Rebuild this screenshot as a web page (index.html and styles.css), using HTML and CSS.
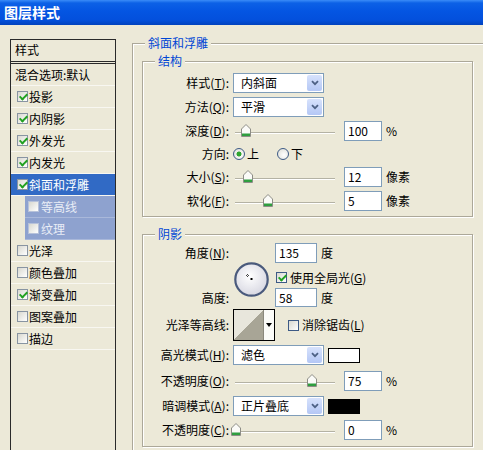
FILE: index.html
```html
<!DOCTYPE html>
<html lang="zh-CN">
<head>
    <meta charset="UTF-8">
    <title>图层样式</title>
    <link rel="stylesheet" href="styles.css">
</head>
<body>
    <div class="titlebar">图层样式</div>
    <div class="dialog">
        <div class="style_list">
            <div class="list_head">样式</div>
            <div class="list_row plain">混合选项:默认</div>
            <div class="list_row"><span class="check on"></span>投影</div>
            <div class="list_row"><span class="check on"></span>内阴影</div>
            <div class="list_row"><span class="check on"></span>外发光</div>
            <div class="list_row"><span class="check on"></span>内发光</div>
            <div class="list_row selected"><span class="check on"></span>斜面和浮雕</div>
            <div class="list_row sub"><span class="check"></span>等高线</div>
            <div class="list_row sub"><span class="check"></span>纹理</div>
            <div class="list_row"><span class="check"></span>光泽</div>
            <div class="list_row"><span class="check"></span>颜色叠加</div>
            <div class="list_row"><span class="check on"></span>渐变叠加</div>
            <div class="list_row"><span class="check"></span>图案叠加</div>
            <div class="list_row"><span class="check"></span>描边</div>
        </div>

        <fieldset class="group outer">
            <legend>斜面和浮雕</legend>

            <fieldset class="group structure">
                <legend>结构</legend>
                <div class="row">
                    <span class="label">样式(<u>T</u>):</span>
                    <div class="select"><span>内斜面</span><i class="arrow"><svg width="8" height="6" viewBox="0 0 8 6"><path d="M1 1.2 L4 4.2 L7 1.2" fill="none" stroke="#4d6185" stroke-width="1.8"/></svg></i></div>
                </div>
                <div class="row">
                    <span class="label">方法(<u>Q</u>):</span>
                    <div class="select"><span>平滑</span><i class="arrow"><svg width="8" height="6" viewBox="0 0 8 6"><path d="M1 1.2 L4 4.2 L7 1.2" fill="none" stroke="#4d6185" stroke-width="1.8"/></svg></i></div>
                </div>
                <div class="row">
                    <span class="label">深度(<u>D</u>):</span>
                    <div class="slider"><div class="track"></div><svg class="thumb" style="left:8px" width="10" height="13" viewBox="0 0 10 13"><path d="M0.5 5 L5 0.5 L9.5 5 V12.5 H0.5 Z" fill="#fbfbf8" stroke="#8d8d86"/><rect x="1" y="9.5" width="8" height="2.5" fill="#2f9e3f"/></svg></div>
                    <div class="field">100</div><span class="unit">%</span>
                </div>
                <div class="row short">
                    <span class="label">方向:</span>
                    <span class="radio on"></span><span class="radio_text">上</span>
                    <span class="radio"></span><span class="radio_text">下</span>
                </div>
                <div class="row">
                    <span class="label">大小(<u>S</u>):</span>
                    <div class="slider"><div class="track"></div><svg class="thumb" style="left:10px" width="10" height="13" viewBox="0 0 10 13"><path d="M0.5 5 L5 0.5 L9.5 5 V12.5 H0.5 Z" fill="#fbfbf8" stroke="#8d8d86"/><rect x="1" y="9.5" width="8" height="2.5" fill="#2f9e3f"/></svg></div>
                    <div class="field">12</div><span class="unit">像素</span>
                </div>
                <div class="row">
                    <span class="label">软化(<u>F</u>):</span>
                    <div class="slider"><div class="track"></div><svg class="thumb" style="left:30px" width="10" height="13" viewBox="0 0 10 13"><path d="M0.5 5 L5 0.5 L9.5 5 V12.5 H0.5 Z" fill="#fbfbf8" stroke="#8d8d86"/><rect x="1" y="9.5" width="8" height="2.5" fill="#2f9e3f"/></svg></div>
                    <div class="field">5</div><span class="unit">像素</span>
                </div>
            </fieldset>

            <fieldset class="group shadow">
                <legend>阴影</legend>
                <div class="angle_block">
                    <span class="label angle_label">角度(<u>N</u>):</span>
                    <div class="dial">
                        <svg width="35" height="35" viewBox="0 0 35 35">
                            <defs>
                                <radialGradient id="dialfill" cx="45%" cy="40%" r="60%">
                                    <stop offset="0" stop-color="#ffffff"/>
                                    <stop offset="1" stop-color="#d8d8e2"/>
                                </radialGradient>
                            </defs>
                            <circle cx="17.5" cy="17.5" r="16.2" fill="url(#dialfill)" stroke="#4a5a7c" stroke-width="2.2"/>
                            <rect x="13" y="12" width="1" height="1" fill="#444"/>
                            <rect x="12" y="13" width="1" height="1" fill="#444"/>
                            <rect x="14" y="13" width="1" height="1" fill="#444"/>
                            <rect x="13" y="14" width="1" height="1" fill="#444"/>
                            <rect x="16.5" y="16" width="2" height="2" fill="#000"/>
                        </svg>
                    </div>
                    <div class="angle_value"><div class="field wide">135</div><span class="unit">度</span></div>
                    <div class="angle_global"><span class="check on dark"></span><span>使用全局光(<u>G</u>)</span></div>
                    <span class="label height_label">高度:</span>
                    <div class="height_value"><div class="field wide">58</div><span class="unit">度</span></div>
                </div>

                <div class="row contour_row">
                    <span class="label">光泽等高线:</span>
                    <div class="contour"><div class="contour_preview"></div><div class="contour_drop"><i class="tri"></i></div></div>
                    <span class="check dark"></span><span>消除锯齿(<u>L</u>)</span>
                </div>
                <div class="row mode_row">
                    <span class="label">高光模式(<u>H</u>):</span>
                    <div class="select"><span>滤色</span><i class="arrow"><svg width="8" height="6" viewBox="0 0 8 6"><path d="M1 1.2 L4 4.2 L7 1.2" fill="none" stroke="#4d6185" stroke-width="1.8"/></svg></i></div>
                    <span class="swatch"></span>
                </div>
                <div class="row opacity_row">
                    <span class="label">不透明度(<u>O</u>):</span>
                    <div class="slider"><div class="track"></div><svg class="thumb" style="left:74px" width="10" height="13" viewBox="0 0 10 13"><path d="M0.5 5 L5 0.5 L9.5 5 V12.5 H0.5 Z" fill="#fbfbf8" stroke="#8d8d86"/><rect x="1" y="9.5" width="8" height="2.5" fill="#2f9e3f"/></svg></div>
                    <div class="field">75</div><span class="unit">%</span>
                </div>
                <div class="row shadow_mode_row">
                    <span class="label">暗调模式(<u>A</u>):</span>
                    <div class="select"><span>正片叠底</span><i class="arrow"><svg width="8" height="6" viewBox="0 0 8 6"><path d="M1 1.2 L4 4.2 L7 1.2" fill="none" stroke="#4d6185" stroke-width="1.8"/></svg></i></div>
                    <span class="swatch black"></span>
                </div>
                <div class="row opacity_row last">
                    <span class="label">不透明度(<u>C</u>):</span>
                    <div class="slider"><div class="track"></div><svg class="thumb" style="left:-2px" width="10" height="13" viewBox="0 0 10 13"><path d="M0.5 5 L5 0.5 L9.5 5 V12.5 H0.5 Z" fill="#fbfbf8" stroke="#8d8d86"/><rect x="1" y="9.5" width="8" height="2.5" fill="#2f9e3f"/></svg></div>
                    <div class="field">0</div><span class="unit">%</span>
                </div>
            </fieldset>
        </fieldset>
    </div>
</body>
</html>
```

FILE: styles.css
```css
* {
    margin: 0;
    padding: 0;
    box-sizing: border-box;
}
html, body {
    height: 450px;
    overflow: hidden;
}
body {
    background-color: #ece9d8;
    font-family: "Noto Sans CJK SC", "Noto Sans", sans-serif;
    font-size: 12px;
    line-height: 16px;
    color: #000;
}
u {
    text-decoration: underline;
    text-underline-offset: 1px;
}
.titlebar {
    height: 25px;
    padding-left: 4px;
    line-height: 24px;
    color: #fff;
    font-size: 14px;
    font-weight: bold;
    background: linear-gradient(to bottom, #3a8cf8 0, #0c61e6 12%, #0455e2 45%, #0350dc 80%, #0142bd 100%);
}
.dialog {
    display: flex;
    align-items: flex-start;
}

/* left list - runs off the bottom of the window */
.style_list {
    flex: none;
    width: 106px;
    height: 411px;
    margin: 14px 0 0 10px;
    border: 1px solid #2a2a2a;
    border-bottom: none;
}
.list_head {
    height: 24px;
    padding-left: 4px;
    line-height: 20px;
    border-bottom: 3px double #2a2a2a;
}
.list_row {
    display: flex;
    align-items: center;
    height: 22px;
    padding-left: 6px;
    border-bottom: 1px solid #f8f7f1;
}
.list_row.plain {
    padding-left: 4px;
}
.list_row .check {
    margin-right: 1px;
}
.list_row.selected {
    background-color: #316ac5;
    color: #fff;
}
.list_row.sub {
    margin-left: 14px;
    padding-left: 3px;
    background-color: #8ea2cf;
    color: #e9edf6;
    border-bottom-color: #a9b8da;
}
.list_row.sub .check {
    margin-right: 2px;
    border-color: #b7c2da;
}

/* controls */
.check {
    position: relative;
    flex: none;
    width: 11px;
    height: 11px;
    border: 1px solid #8894a2;
    background: linear-gradient(135deg, #d8d8d0, #ffffff);
}
.check.dark {
    border-color: #3d5a85;
    margin-right: 3px;
}
.check.on::after {
    content: "";
    position: absolute;
    left: 3px;
    top: 0;
    width: 3px;
    height: 6px;
    border: solid #21a121;
    border-width: 0 2px 2px 0;
    transform: rotate(45deg);
}
.radio {
    flex: none;
    width: 12px;
    height: 12px;
    border-radius: 50%;
    border: 1px solid #3d5a85;
    background: radial-gradient(circle at 60% 60%, #ffffff, #dcdcd4);
}
.radio.on {
    background: radial-gradient(circle, #2fa52f 0, #2fa52f 2.2px, transparent 2.8px), radial-gradient(circle at 60% 60%, #ffffff, #dcdcd4);
}
.radio_text {
    margin: 0 18px 0 2px;
}
.select {
    display: flex;
    width: 91px;
    height: 20px;
    border: 1px solid #7f9db9;
    background-color: #fff;
}
.select span {
    flex: 1;
    padding-left: 7px;
    line-height: 18px;
}
.arrow {
    display: flex;
    align-items: center;
    justify-content: center;
    width: 15px;
    margin: 1px;
    border-radius: 2px;
    background: linear-gradient(to bottom, #d7e2fc, #b4c7f5);
}
.field {
    width: 38px;
    height: 20px;
    padding-left: 3px;
    line-height: 18px;
    border: 1px solid #7f9db9;
    background-color: #fff;
}
.field.wide {
    width: 42px;
}
.unit {
    margin-left: 4px;
}
.slider {
    position: relative;
    flex: none;
    width: 104px;
    height: 20px;
    margin-right: 7px;
}
.track {
    height: 2px;
    margin: 11px 2px 0;
    border-top: 1px solid #b4b2a4;
    border-bottom: 1px solid #fff;
}
.thumb {
    position: absolute;
    top: 3px;
}
.swatch {
    width: 32px;
    height: 15px;
    margin-left: 4px;
    border: 1px solid #000;
    background-color: #fff;
}
.swatch.black {
    background-color: #000;
}

/* group boxes */
.group {
    border: 1px solid #aca899;
    box-shadow: inset 1px 1px 0 #fff, 1px 1px 0 #fff;
}
legend {
    margin-left: 12px;
    padding: 0 3px;
    color: #0046d5;
    line-height: 16px;
    background-color: #ece9d8;
}
.outer {
    flex: none;
    width: 360px;
    height: 415px;
    margin: 10px 0 0 16px;
    padding: 2px 0 0 0;
    border-bottom: none;
}
.structure,
.shadow {
    width: 331px;
    margin-left: 9px;
}
.structure {
    display: flex;
    flex-direction: column;
    gap: 2px;
    padding: 3px 0 4px 0;
}
.shadow {
    margin-top: 9px;
    padding: 1px 0 6px 0;
}
.row {
    display: flex;
    align-items: center;
    height: 22px;
}
.row.short {
    height: 20px;
}
.label {
    flex: none;
    width: 86px;
    margin-right: 4px;
    text-align: right;
}

/* angle block */
.angle_block {
    display: grid;
    grid-template-columns: 86px 38px auto;
    grid-template-rows: 20px 25px 19px;
    column-gap: 4px;
}
.angle_block .label {
    margin-right: 0;
    align-self: center;
}
.angle_label {
    grid-column: 1;
    grid-row: 1;
}
.height_label {
    grid-column: 1;
    grid-row: 3;
}
.dial {
    grid-column: 2;
    grid-row: 1 / 4;
    align-self: end;
    margin: 0 0 10px 1px;
    height: 35px;
}
.angle_value,
.height_value,
.angle_global {
    display: flex;
    align-items: center;
    grid-column: 3;
}
.angle_value {
    grid-row: 1;
}
.angle_global {
    grid-row: 2;
    padding-top: 4px;
    padding-left: 1px;
}
.height_value {
    grid-row: 3;
}
.height_value .field {
    height: 19px;
}

/* contour */
.contour_row {
    height: 32px;
    margin-top: 2px;
}
.contour {
    display: flex;
    width: 42px;
    height: 32px;
    margin-right: 13px;
    border: 1px solid #000;
}
.contour_preview {
    width: 29px;
    background: linear-gradient(to bottom right, #e8e6dc 50%, #a8a596 50%);
}
.contour_drop {
    display: flex;
    align-items: center;
    justify-content: center;
    flex: 1;
    border-left: 1px solid #8a887c;
    background-color: #fbfbf8;
}
.tri {
    width: 0;
    height: 0;
    border-left: 3px solid transparent;
    border-right: 3px solid transparent;
    border-top: 4px solid #000;
}
.mode_row {
    height: 20px;
    margin-top: 4px;
}
.opacity_row {
    height: 20px;
    margin-top: 6px;
}
.opacity_row.last {
    margin-top: 4px;
}
.shadow_mode_row {
    height: 20px;
    margin-top: 5px;
}
```
